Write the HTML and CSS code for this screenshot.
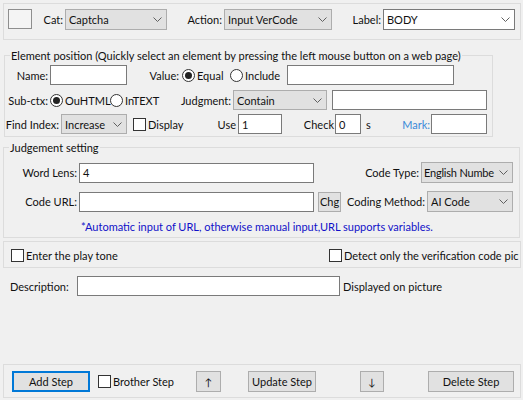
FILE: index.html
```html
<!DOCTYPE html>
<html>
<head>
<meta charset="utf-8">
<link rel="stylesheet" href="styles.css">
</head>
<body>
<div class="page">
  <div class="panel top">
    <div class="colorbox"></div>
    <span class="lbl w33">Cat:</span>
    <div class="combo w102"><span class="ctext">Captcha</span><svg class="chev" width="9" height="5" viewBox="0 0 9 5"><polyline points="0.5,0.5 4.5,4.5 8.5,0.5" fill="none" stroke="#606060" stroke-width="1"/></svg></div>
    <span class="lbl w57">Action:</span>
    <div class="combo w108"><span class="ctext">Input VerCode</span><svg class="chev" width="9" height="5" viewBox="0 0 9 5"><polyline points="0.5,0.5 4.5,4.5 8.5,0.5" fill="none" stroke="#606060" stroke-width="1"/></svg></div>
    <span class="lbl w51">Label:</span>
    <div class="combo edit w132"><span class="ctext">BODY</span><svg class="chev" width="9" height="5" viewBox="0 0 9 5"><polyline points="0.5,0.5 4.5,4.5 8.5,0.5" fill="none" stroke="#606060" stroke-width="1"/></svg></div>
  </div>

  <fieldset class="group elem">
    <legend>Element position (Quickly select an element by pressing the left mouse button on a web page)</legend>
    <div class="row r1">
      <span class="lbl w45">Name:</span>
      <div class="tbox w77"></div>
      <span class="lbl w55 pr3">Value:</span>
      <span class="radio w48"><span class="dot on"></span>Equal</span>
      <span class="radio w57"><span class="dot"></span>Include</span>
      <div class="tbox w167"></div>
    </div>
    <div class="row r2">
      <span class="lbl w45">Sub-ctx:</span>
      <span class="radio w60"><span class="dot on"></span>OuHTML</span>
      <span class="radio w60"><span class="dot"></span>InTEXT</span>
      <span class="lbl w63">Judgment:</span>
      <div class="combo w94 h20"><span class="ctext">Contain</span><svg class="chev" width="9" height="5" viewBox="0 0 9 5"><polyline points="0.5,0.5 4.5,4.5 8.5,0.5" fill="none" stroke="#606060" stroke-width="1"/></svg></div>
      <div class="tbox w155 ml5"></div>
    </div>
    <div class="row r3">
      <span class="lbl w56">Find Index:</span>
      <div class="combo w66 h20"><span class="ctext">Increase</span><svg class="chev" width="9" height="5" viewBox="0 0 9 5"><polyline points="0.5,0.5 4.5,4.5 8.5,0.5" fill="none" stroke="#606060" stroke-width="1"/></svg></div>
      <span class="check w67 ml6"><span class="box"></span>Display</span>
      <span class="lbl w38">Use</span>
      <div class="tbox w44"><span class="ttext">1</span></div>
      <span class="lbl w53 pr1">Check</span>
      <div class="tbox w26"><span class="ttext">0</span></div>
      <span class="lbl left w40 pl5">s</span>
      <span class="lbl w30 pr1 mark">Mark:</span>
      <div class="tbox w56"></div>
    </div>
  </fieldset>

  <fieldset class="group judge">
    <legend>Judgement setting</legend>
    <div class="row j1">
      <span class="lbl w75">Word Lens:</span>
      <div class="tbox w235"><span class="ttext">4</span></div>
      <span class="lbl w107">Code Type:</span>
      <div class="combo w92 tight"><span class="ctext">English Numbe</span><svg class="chev" width="9" height="5" viewBox="0 0 9 5"><polyline points="0.5,0.5 4.5,4.5 8.5,0.5" fill="none" stroke="#606060" stroke-width="1"/></svg></div>
    </div>
    <div class="row j2">
      <span class="lbl w75">Code URL:</span>
      <div class="tbox w235"></div>
      <button class="btn chg">Chg</button>
      <span class="lbl w86">Coding Method:</span>
      <div class="combo w86"><span class="ctext">AI Code</span><svg class="chev" width="9" height="5" viewBox="0 0 9 5"><polyline points="0.5,0.5 4.5,4.5 8.5,0.5" fill="none" stroke="#606060" stroke-width="1"/></svg></div>
    </div>
    <div class="note">*Automatic input of URL, otherwise manual input,URL supports variables.</div>
  </fieldset>

  <div class="panel checks">
    <span class="check w318"><span class="box"></span>Enter the play tone</span>
    <span class="check clip"><span class="box"></span>Detect only the verification code pic</span>
  </div>

  <div class="row desc">
    <span class="lbl left w67">Description:</span>
    <div class="tbox w263"></div>
    <span class="after">Displayed on picture</span>
  </div>

  <div class="panel bottom">
    <button class="btn add">Add Step</button>
    <span class="check w98 ml8"><span class="box"></span>Brother Step</span>
    <button class="btn arrow">↑</button>
    <button class="btn update">Update Step</button>
    <button class="btn arrow down">↓</button>
    <button class="btn del">Delete Step</button>
  </div>
</div>
</body>
</html>
```
FILE: styles.css
```css
* { box-sizing: border-box; }
html, body { margin: 0; padding: 0; }
body {
  background: #f0f0f0;
  font-family: "Lato", "Liberation Sans", sans-serif;
  font-size: 11px;
  color: #111;
  width: 523px;
  height: 400px;
  overflow: hidden;
}
.page {
  height: 400px;
  display: flex;
  flex-direction: column;
  align-items: flex-start;
}

/* generic pieces */
.panel {
  border: 1px solid #dcdcdc;
  display: flex;
  align-items: flex-start;
  flex-shrink: 0;
}
.row { display: flex; align-items: center; flex-shrink: 0; }
.lbl {
  flex-shrink: 0;
  display: flex;
  justify-content: flex-end;
  padding-right: 2px;
  white-space: nowrap;
  line-height: 15px;
}
.lbl.left { justify-content: flex-start; padding-right: 0; }
.pr1 { padding-right: 1px; }
.pr3 { padding-right: 3px; }
.pl5 { padding-left: 5px; }
.ml5 { margin-left: 5px; }
.ml6 { margin-left: 6px; }
.ml8 { margin-left: 8px; }
.mark { color: #3a8ad8; }

.w26 { width: 26px; } .w30 { width: 30px; } .w33 { width: 33px; }
.w38 { width: 38px; } .w40 { width: 40px; } .w44 { width: 44px; }
.w45 { width: 45px; } .w48 { width: 48px; } .w51 { width: 51px; }
.w53 { width: 53px; } .w55 { width: 55px; } .w56 { width: 56px; }
.w57 { width: 57px; } .w60 { width: 60px; } .w63 { width: 63px; }
.w66 { width: 66px; } .w67 { width: 67px; } .w75 { width: 75px; }
.w77 { width: 77px; } .w86 { width: 86px; } .w92 { width: 92px; }
.w94 { width: 94px; } .w98 { width: 98px; } .w102 { width: 102px; }
.w107 { width: 107px; } .w108 { width: 108px; } .w132 { width: 132px; }
.w155 { width: 155px; } .w167 { width: 167px; } .w235 { width: 235px; }
.w263 { width: 263px; } .w318 { width: 318px; }

.combo {
  flex-shrink: 0;
  height: 21px;
  background: #e1e1e1;
  border: 1px solid #adadad;
  display: flex;
  align-items: center;
  padding-left: 3px;
  white-space: nowrap;
  overflow: hidden;
}
.combo.h20 { height: 20px; }
.combo.edit { background: #fff; border-color: #7a7a7a; }
.ctext { flex: 1; overflow: hidden; }
.chev { flex-shrink: 0; margin: 0 4px 0 4px; }
.combo.tight { padding-left: 2px; }
.combo.tight .ctext { letter-spacing: -0.2px; }
.combo.tight .chev { margin-left: 1px; }

.tbox {
  flex-shrink: 0;
  height: 20px;
  background: #fff;
  border: 1px solid #7a7a7a;
  display: flex;
  align-items: center;
  padding-left: 3px;
}

.radio, .check {
  flex-shrink: 0;
  display: flex;
  align-items: center;
  white-space: nowrap;
}
.dot {
  width: 13px; height: 13px;
  border: 1px solid #333;
  border-radius: 50%;
  background: #fff;
  margin-right: 2px;
  display: flex;
  align-items: center;
  justify-content: center;
  flex-shrink: 0;
}
.dot.on::after {
  content: "";
  width: 7px; height: 7px;
  border-radius: 50%;
  background: #222;
}
.box {
  width: 13px; height: 13px;
  border: 1px solid #333;
  background: #fff;
  margin-right: 2px;
  flex-shrink: 0;
}

.btn {
  font: inherit;
  color: #111;
  background: #e1e1e1;
  border: 1px solid #adadad;
  height: 21px;
  padding: 0;
  flex-shrink: 0;
}

/* top panel: x 3..520, y 3..39 */
.top {
  margin: 3px 0 0 3px;
  width: 518px;
  height: 37px;
  padding: 5px 0 0 4px;
}
.top .lbl { line-height: 21px; }
.colorbox {
  width: 24px; height: 20px;
  border: 1px solid #8e8e8e;
  background: #f4f4f4;
  flex-shrink: 0;
}

/* group boxes */
.group {
  border: 1px solid #dcdcdc;
  margin: 0;
  padding: 0;
  flex-shrink: 0;
  min-width: 0;
}
.group legend {
  padding: 0 1px;
  margin-left: 5px;
  line-height: 15px;
}
.elem {
  margin: 8px 0 0 4px;
  width: 489px;
  padding: 2px 0 2px 0;
}
.r1 { height: 20px; }
.r2 { height: 20px; margin-top: 5px; }
.r3 { height: 20px; margin-top: 4px; }
.ttext { line-height: 15px; }

.judge {
  margin: 3px 0 0 3px;
  width: 517px;
  padding: 7px 0 3px 0;
}
.j1 { height: 21px; }
.j2 { height: 21px; margin-top: 8px; }
.chg { width: 23px; height: 20px; margin-left: 4px; }
.note {
  color: #1010c8;
  padding-left: 77px;
  margin-top: 7px;
  line-height: 15px;
}

/* checkbox strip: y 243..269 */
.checks {
  margin: 3px 0 0 3px;
  width: 518px;
  height: 27px;
  padding: 7px 0 0 7px;
  overflow: hidden;
}
.checks .check { line-height: 13px; }
.clip { overflow: hidden; }

/* description */
.desc { margin: 8px 0 0 10px; height: 20px; }
.after { margin-left: 3px; white-space: nowrap; }

/* bottom strip: y 364..397 */
.bottom {
  margin: auto 0 2px 3px;
  width: 518px;
  height: 34px;
  padding: 6px 0 0 8px;
}
.bottom .check { height: 21px; }
.add { width: 78px; border: 2px solid #0078d7; }
.arrow { width: 25px; font-size: 10px; }
.update { width: 68px; margin-left: 27px; }
.down { width: 24px; margin-left: 44px; }
.del { width: 86px; margin-left: 44px; }
```
